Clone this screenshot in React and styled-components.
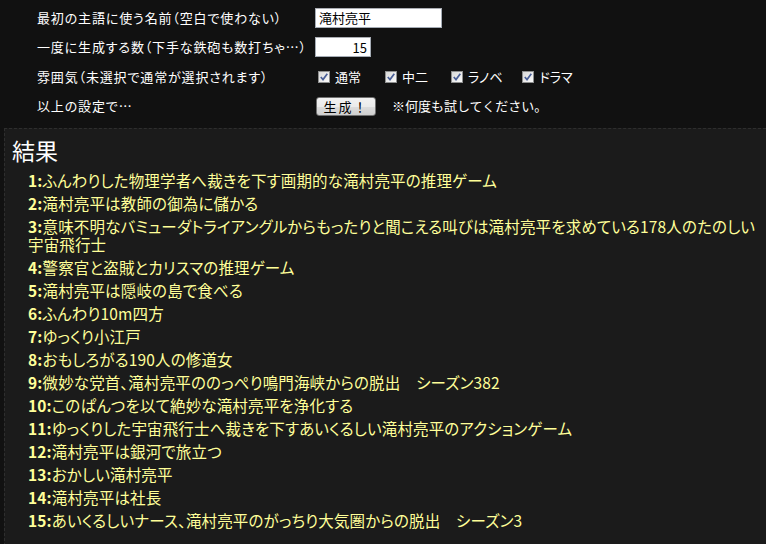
import React, { useState } from 'react';
import styled, { createGlobalStyle } from 'styled-components';

const GlobalStyle = createGlobalStyle`
  html, body {
    margin: 0;
    padding: 0;
    background: #111111;
  }
  body {
    font-family: "Noto Sans CJK JP", "Noto Sans", sans-serif;
    color: #ffffff;
  }
`;

const Page = styled.div`
  width: 766px;
  height: 544px;
  overflow: hidden;
  background: #111111;
`;

const Form = styled.div`
  display: grid;
  grid-template-columns: 278px auto;
  grid-auto-rows: 29.5px;
  align-items: center;
  padding: 3px 0 0 37px;
  height: 128px;
  box-sizing: border-box;
  font-size: 13px;
  line-height: 16px;
`;

const Label = styled.div`
  white-space: nowrap;
  color: #ffffff;
  font-feature-settings: "palt";
  letter-spacing: 0.85px;
`;

const Field = styled.div`
  display: flex;
  align-items: center;
`;

const TextBox = styled.input`
  box-sizing: border-box;
  width: ${p => p.$w}px;
  height: 20px;
  border: 1px solid #a5acb5;
  border-top-color: #abadb3;
  background: #ffffff;
  color: #000000;
  font-family: "Noto Sans CJK JP", sans-serif;
  font-size: 13px;
  padding: 0 3px;
  text-align: ${p => p.$align || 'left'};
  outline: none;
`;

const Check = styled.label`
  display: flex;
  align-items: center;
  gap: 5px;
  margin-left: 3px;
  margin-right: ${p => p.$gap}px;
  font-size: 13px;
  color: #ffffff;
  font-feature-settings: "palt";
`;

const Box = styled.span`
  width: 12px;
  height: 12px;
  box-sizing: border-box;
  border: 1px solid #8e8f8f;
  background: linear-gradient(135deg, #d8d8d8, #fbfbfb);
  display: flex;
  align-items: center;
  justify-content: center;
`;

const Button = styled.button`
  box-sizing: border-box;
  width: 60px;
  height: 19px;
  padding: 0;
  margin-left: 1px;
  border: 1px solid #707070;
  border-radius: 3px;
  background: linear-gradient(#f2f2f2 0%, #ebebeb 50%, #dddddd 51%, #cfcfcf 100%);
  font-family: "Noto Sans CJK JP", sans-serif;
  font-size: 13px;
  line-height: 15px;
  color: #000000;
  letter-spacing: 2px;
`;

const Note = styled.span`
  margin-left: 16px;
  font-size: 13px;
`;

const Panel = styled.section`
  margin-left: 4px;
  border-top: 1px dashed #2e2e2e;
  border-left: 1px dashed #2e2e2e;
  background: #1b1b1b;
  padding: 7px 2px 0 7px;
  height: 420px;
`;

const Heading = styled.h2`
  margin: 0;
  font-weight: normal;
  font-size: 23px;
  line-height: 28px;
  color: #ffffff;
`;

const List = styled.ol`
  list-style: none;
  margin: 7px 0 0 0;
  padding: 0 0 0 16px;
`;

const Item = styled.li`
  font-size: 15.5px;
  line-height: 18px;
  margin-bottom: 5px;
  color: #ffff99;
  font-feature-settings: "palt";
  letter-spacing: 0.15px;
`;

const Num = styled.b`
  font-weight: bold;
`;

const CheckMark = () => (
  <svg width="10" height="10" viewBox="0 0 10 10">
    <path d="M1.8 5 L4 7.6 L8.3 1.8" fill="none" stroke="#4a5f97" strokeWidth="1.7" />
  </svg>
);

const results = [
  'ふんわりした物理学者へ裁きを下す画期的な滝村亮平の推理ゲーム',
  '滝村亮平は教師の御為に儲かる',
  '意味不明なバミューダトライアングルからもったりと聞こえる叫びは滝村亮平を求めている178人のたのしい宇宙飛行士',
  '警察官と盗賊とカリスマの推理ゲーム',
  '滝村亮平は隠岐の島で食べる',
  'ふんわり10m四方',
  'ゆっくり小江戸',
  'おもしろがる190人の修道女',
  '微妙な党首、滝村亮平ののっぺり鳴門海峡からの脱出　シーズン382',
  'このぱんつを以て絶妙な滝村亮平を浄化する',
  'ゆっくりした宇宙飛行士へ裁きを下すあいくるしい滝村亮平のアクションゲーム',
  '滝村亮平は銀河で旅立つ',
  'おかしい滝村亮平',
  '滝村亮平は社長',
  'あいくるしいナース、滝村亮平のがっちり大気圏からの脱出　シーズン3',
];

const moods = [
  { name: '通常', gap: 21 },
  { name: '中二', gap: 20 },
  { name: 'ラノベ', gap: 17 },
  { name: 'ドラマ', gap: 0 },
];

export default function App() {
  const [name, setName] = useState('滝村亮平');
  const [count, setCount] = useState('15');

  return (
    <Page>
      <GlobalStyle />
      <Form>
        <Label>最初の主語に使う名前（空白で使わない）</Label>
        <Field>
          <TextBox $w={127} value={name} onChange={e => setName(e.target.value)} />
        </Field>
        <Label>一度に生成する数（下手な鉄砲も数打ちゃ…）</Label>
        <Field>
          <TextBox $w={56} $align="right" value={count} onChange={e => setCount(e.target.value)} />
        </Field>
        <Label>雰囲気（未選択で通常が選択されます）</Label>
        <Field>
          {moods.map(m => (
            <Check key={m.name} $gap={m.gap}>
              <Box><CheckMark /></Box>
              {m.name}
            </Check>
          ))}
        </Field>
        <Label>以上の設定で…</Label>
        <Field>
          <Button>生成！</Button>
          <Note>※何度も試してください。</Note>
        </Field>
      </Form>
      <Panel>
        <Heading>結果</Heading>
        <List>
          {results.map((r, i) => (
            <Item key={i}>
              <Num>{i + 1}:</Num>{r}
            </Item>
          ))}
        </List>
      </Panel>
    </Page>
  );
}
